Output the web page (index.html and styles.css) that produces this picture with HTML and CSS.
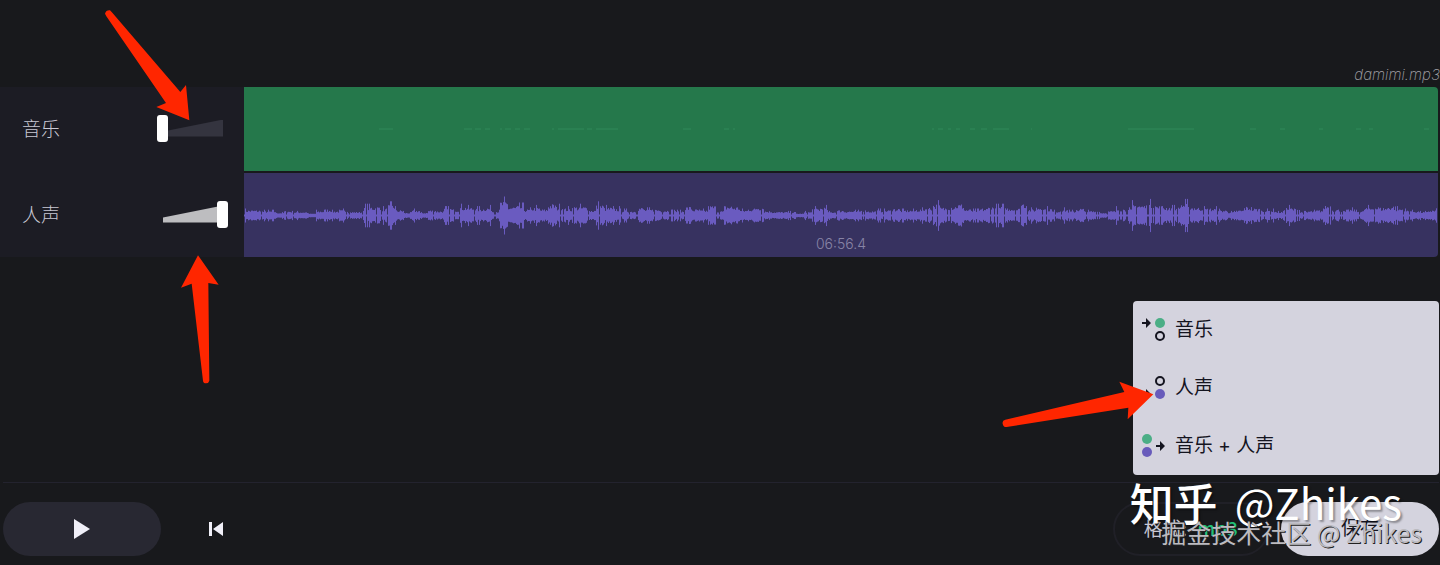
FILE: index.html
```
<!DOCTYPE html>
<html lang="zh-CN">
<head>
  <meta charset="UTF-8">
  <meta name="viewport" content="width=device-width, initial-scale=1">
  <title>人声分离</title>
  <link rel="stylesheet" href="styles.css">
</head>
<body>
  <header class="file-bar">
    <span class="file-name">damimi.mp3</span>
  </header>

  <main class="mixer">
    <div class="controls">
      <div class="control">
        <label for="vol-music">音乐</label>
        <div class="volume muted">
          <input type="range" id="vol-music" min="0" max="100" value="0">
        </div>
      </div>
      <div class="control">
        <label for="vol-voice">人声</label>
        <div class="volume">
          <input type="range" id="vol-voice" min="0" max="100" value="100">
        </div>
      </div>
    </div>
    <div class="tracks">
      <div class="track music">
        <svg viewBox="0 0 1194 84" preserveAspectRatio="none">
          <path d="M135 42h14M220 42h8m3 0h6m4 0h5M256 42h2m3 0h6m4 0h5m4 0h6M308 42h2m4 0h26m3 0h5m4 0h22M439 42h8M480 42h5m4 0h2M688 42h2m4 0h5m5 0h3m5 0h4m10 0h5m6 0h6m6 0h16M787 42h1M884 42h66M1006 42h6M1036 42h5M1075 42h4M1112 42h5m8 0h4M1180 42h5"/>
        </svg>
      </div>
      <div class="track voice">
        <svg viewBox="0 0 1194 84" preserveAspectRatio="none">
          <path id="wave"/>
        </svg>
        <span class="duration">06:56.4</span>
      </div>
    </div>
  </main>

  <footer class="player">
    <button class="pill play" aria-label="播放">
      <svg width="16" height="20" viewBox="0 0 16 20"><path d="M0 0l16 10L0 20z"/></svg>
    </button>
    <button class="rewind" aria-label="回到开头">
      <svg width="14" height="14" viewBox="0 0 14 14"><path d="M0 0h3v14H0zM14 0v14L4 7z"/></svg>
    </button>

    <div class="export">
      <div class="pill format">
        <label for="format">格式:</label>
        <select id="format">
          <option>mp3</option>
          <option>wav</option>
        </select>
      </div>
      <button class="pill save">保存</button>

      <div class="menu">
        <button class="menu-item">
          <svg width="24" height="24" viewBox="0 0 24 24">
            <path class="arr" d="M0 4h4V0l5 5-5 5V6H0z"/>
            <circle class="green" cx="18" cy="5" r="5"/>
            <circle class="ring" cx="18" cy="18" r="4"/>
          </svg>
          <span>音乐</span>
        </button>
        <button class="menu-item">
          <svg width="24" height="24" viewBox="0 0 24 24">
            <path class="arr" d="M0 17h4v-4l5 5-5 5v-4H0z"/>
            <circle class="ring" cx="18" cy="5" r="4"/>
            <circle class="purple" cx="18" cy="18" r="5"/>
          </svg>
          <span>人声</span>
        </button>
        <button class="menu-item">
          <svg width="24" height="24" viewBox="0 0 24 24">
            <circle class="green" cx="5" cy="5" r="5"/>
            <circle class="purple" cx="5" cy="18" r="5"/>
            <path class="arr" d="M14 11h4V7l5 5-5 5v-4h-4z"/>
          </svg>
          <span>音乐 + 人声</span>
        </button>
      </div>
    </div>
  </footer>

  <svg class="pointer to-music" width="86" height="112" viewBox="0 0 258 336">
    <path d="M0 14Q3 3 15 4L20 9 226 249 243 228 253 334 154 294 183 282 4 22z"/>
  </svg>
  <svg class="pointer to-voice" width="40" height="130" viewBox="0 0 120 390">
    <path d="M54 4L116 92 85 87 88 380Q86 388 78 388 70 388 69 380L35 89 3 101z"/>
  </svg>
  <svg class="pointer to-menu" width="152" height="48" viewBox="0 0 456 144">
    <path d="M454 61L352 23 367 54 10 137Q0 139 2 149 4 160 14 159L379 101 377 136z"/>
  </svg>

  <div class="mark zhihu"><b>知乎</b><span>@Zhikes</span></div>
  <div class="mark juejin">掘金技术社区 @ Zhikes</div>

  <script>
    // loudness of the voice track, one value for every 8 units of width
    const levels = [
      5, 5, 4, 4, 2, 4, 3, 3, 1, 4, 6, 4, 5, 3, 3, 9, 9, 7, 11, 5,
      2, 5, 2, 5, 4, 7, 6, 9, 8, 7, 8, 4, 15, 9, 10, 6, 8, 6, 12, 9,
      7, 9, 9, 5, 11, 8, 7, 5, 4, 8, 6, 6, 5, 6, 4, 9, 6, 5, 10, 4,
      10, 9, 5, 7, 9, 4, 3, 3, 3, 1, 3, 7, 8, 3, 5, 4, 4, 5, 4, 5,
      5, 7, 5, 5, 6, 8, 12, 8, 10, 12, 6, 5, 7, 9, 9, 8, 7, 14, 6, 9,
      7, 4, 6, 4, 7, 4, 4, 2, 4, 7, 6, 12, 11, 13, 10, 9, 8, 13, 9, 8,
      7, 7, 5, 3, 5, 9, 7, 5, 5, 3, 8, 7, 3, 4, 5, 11, 6, 4, 6, 4,
      8, 9, 8, 10, 7, 5, 4, 3, 5, 9
    ];
    let seed = 7;
    function rand() {
      seed = (seed * 16807) % 2147483647;
      return seed / 2147483647;
    }
    let d = '';
    for (let x = 0; x < 1193; x++) {
      const level = levels[Math.floor(x / 8)] || 3;
      const r = rand();
      let h = 1 + level * (0.4 + 0.5 * r);
      if (r > 0.9) h = 1 + level * 1.2;
      if (r < 0.07) h = 1;
      d += `M${x + 0.5} ${(42.5 - h).toFixed(1)}V${(42.5 + h).toFixed(1)}`;
    }
    document.getElementById('wave').setAttribute('d', d);
  </script>
</body>
</html>
```
FILE: styles.css
```
:root {
  --bg: #18191c;
  --panel: #1c1c24;
  --pill: #282832;
  --light: #d4d3de;
  --ink: #14141f;
  --green: #25784b;
  --purple: #373260;
  --red: #ff2600;
}
* {
  box-sizing: border-box;
}
body {
  margin: 0;
  min-height: 100vh;
  display: flex;
  flex-direction: column;
  position: relative;
  overflow-x: hidden;
  background: var(--bg);
  color: #c9c8d4;
  font-family: "Noto Sans CJK SC", sans-serif;
  font-size: 19px;
  line-height: 28px;
}
button, select {
  font: inherit;
  color: inherit;
  border: none;
  background: none;
  padding: 0;
  cursor: pointer;
}

.file-bar {
  height: 87px;
  display: flex;
  justify-content: flex-end;
  align-items: flex-end;
}
.file-name {
  font-family: Inter, sans-serif;
  font-size: 15px;
  font-weight: 200;
  font-style: italic;
  line-height: 24px;
  color: #a4a4a9;
}

.mixer {
  display: flex;
  padding-right: 2px;
}
.controls {
  width: 244px;
  display: grid;
  gap: 2px;
  background: var(--panel);
}
.control {
  height: 84px;
  display: flex;
  align-items: center;
  justify-content: space-between;
  padding: 0 16px 2px 22px;
}
.control label {
  font-weight: 300;
}
.volume {
  position: relative;
  width: 71px;
  height: 27px;
}
.volume::before {
  content: "";
  position: absolute;
  inset: 5px 5px 5px 6px;
  background: #bdbdc0;
  clip-path: polygon(0 70%, 100% 0, 100% 100%, 0 100%);
}
.volume.muted::before {
  background: #34343f;
}
.volume input {
  appearance: none;
  position: relative;
  display: block;
  width: 100%;
  height: 27px;
  margin: 0;
  background: none;
}
.volume input::-webkit-slider-thumb {
  appearance: none;
  width: 11px;
  height: 27px;
  border-radius: 3px;
  background: white;
}

.tracks {
  flex: 1;
  display: grid;
  gap: 2px;
}
.track {
  position: relative;
  height: 84px;
}
.track svg {
  display: block;
  width: 100%;
  height: 100%;
}
.music {
  background: var(--green);
  border-top-right-radius: 4px;
}
.music path {
  stroke: #31895a;
}
.voice {
  background: var(--purple);
  border-bottom-right-radius: 4px;
}
.voice path {
  stroke: #6a5bc0;
}
.duration {
  position: absolute;
  bottom: 3px;
  left: 0;
  right: 0;
  text-align: center;
  font-family: Inter, sans-serif;
  font-size: 14px;
  font-weight: 300;
  line-height: 20px;
  color: #8884a6;
}

.player {
  margin: auto 1px 0 3px;
  height: 83px;
  border-top: 1px solid #23232e;
  display: flex;
  align-items: center;
  padding-bottom: 10px;
  padding-top: 20px;
}
.pill {
  height: 54px;
  border-radius: 27px;
}
.play {
  width: 158px;
  background: var(--pill);
}
.play svg, .rewind svg {
  display: block;
  margin: auto;
  fill: #f0eff8;
}
.rewind {
  width: 54px;
  height: 54px;
  margin-left: 28px;
}
.export {
  position: relative;
  margin-left: auto;
  display: flex;
  gap: 12px;
}
.format {
  width: 156px;
  border: 2px solid #202027;
  display: flex;
  align-items: center;
  justify-content: center;
  gap: 10px;
  padding-bottom: 2px;
}
.format select {
  appearance: none;
  color: #21c078;
  font-weight: 500;
}
.save {
  width: 158px;
  padding-bottom: 4px;
  background: var(--light);
  color: var(--ink);
}
.menu {
  position: absolute;
  right: 0;
  bottom: 81px;
  width: 306px;
  background: var(--light);
  border-radius: 4px;
}
.menu-item {
  width: 100%;
  height: 58px;
  padding-left: 9px;
  display: flex;
  align-items: center;
  gap: 9px;
  font-family: Inter, "Noto Sans CJK SC", sans-serif;
  color: var(--ink);
}
.arr {
  fill: var(--ink);
}
.ring {
  fill: none;
  stroke: var(--ink);
  stroke-width: 2;
}
.green {
  fill: #4bae86;
}
.purple {
  fill: #685bbb;
}

/* red hints over the controls */
.pointer {
  position: absolute;
  fill: var(--red);
  pointer-events: none;
}
.to-music {
  left: 105px;
  top: 9px;
}
.to-voice {
  left: 180px;
  top: 254px;
}
.to-menu {
  right: 286px;
  top: 374px;
  overflow: visible;
}

.mark {
  position: absolute;
  white-space: nowrap;
  pointer-events: none;
}
.zhihu {
  right: 38px;
  bottom: 33px;
  display: flex;
  gap: 17px;
  font-size: 42px;
  line-height: 60px;
  color: white;
  text-shadow: 2px 2px 2px rgba(0, 0, 0, 0.35);
}
.zhihu b {
  font-size: 44px;
  font-weight: 500;
}
.juejin {
  right: 18px;
  bottom: 15px;
  font-size: 25px;
  line-height: 36px;
  color: #bcbbc0;
  text-shadow: 1px 1px 0 #222;
}
```
